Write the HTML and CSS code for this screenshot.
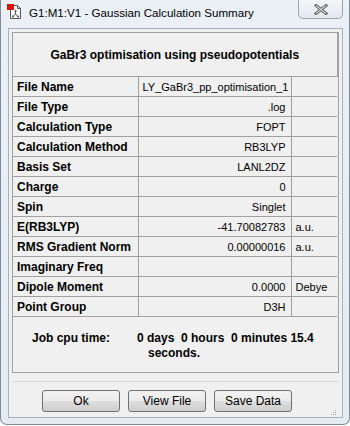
FILE: index.html
```html
<!DOCTYPE html>
<html>
<head>
  <meta name="viewport" content="width=device-width" />
  <link rel="stylesheet" href="styles.css">
  <title>Gaussian Calculation Summary</title>
</head>
<body>
  <div class="window">
    <div class="titlebar">
      <svg class="appicon" width="16" height="16" viewBox="0 0 16 16">
        <path d="M3.5 1.5h7l3 3v10h-10z" fill="#fff" stroke="#555" />
        <path d="M10.5 1.5v3h3" fill="none" stroke="#555" />
        <rect x="0" y="0" width="7" height="6" fill="#e01010" />
        <path d="M8.5 7v3M8.5 10l-2.5 2.5M8.5 10l2.5 2.5" stroke="#555" stroke-width="1" fill="none" />
        <circle cx="8.5" cy="7" r="1.1" fill="#555" />
        <circle cx="6" cy="12.5" r="1.1" fill="#555" />
        <circle cx="11" cy="12.5" r="1.1" fill="#555" />
      </svg>
      <span class="caption">G1:M1:V1 - Gaussian Calculation Summary</span>
      <div class="closebtn">
        <svg width="14" height="11" viewBox="0 0 14 11">
          <path d="M2 1.5l10 8M12 1.5l-10 8" stroke="#6b6b6b" stroke-width="3" stroke-linecap="square" />
          <path d="M2 1.5l10 8M12 1.5l-10 8" stroke="#f4f4f4" stroke-width="1" />
        </svg>
      </div>
    </div>

    <div class="client">
      <div class="group">
        <table class="summary">
          <colgroup>
            <col class="c-label">
            <col class="c-value">
            <col class="c-unit">
          </colgroup>
          <tr><th colspan="3" class="heading">GaBr3 optimisation using pseudopotentials</th></tr>
          <tr><th>File Name</th><td>LY_GaBr3_pp_optimisation_1</td><td class="unit"></td></tr>
          <tr><th>File Type</th><td>.log</td><td class="unit"></td></tr>
          <tr><th>Calculation Type</th><td>FOPT</td><td class="unit"></td></tr>
          <tr><th>Calculation Method</th><td>RB3LYP</td><td class="unit"></td></tr>
          <tr><th>Basis Set</th><td>LANL2DZ</td><td class="unit"></td></tr>
          <tr><th>Charge</th><td>0</td><td class="unit"></td></tr>
          <tr><th>Spin</th><td>Singlet</td><td class="unit"></td></tr>
          <tr><th>E(RB3LYP)</th><td>-41.70082783</td><td class="unit">a.u.</td></tr>
          <tr><th>RMS Gradient Norm</th><td>0.00000016</td><td class="unit">a.u.</td></tr>
          <tr><th>Imaginary Freq</th><td></td><td class="unit"></td></tr>
          <tr><th>Dipole Moment</th><td>0.0000</td><td class="unit">Debye</td></tr>
          <tr><th>Point Group</th><td>D3H</td><td class="unit"></td></tr>
        </table>
        <div class="cputime">
          <span class="cpulabel">Job cpu time:</span>
          <span class="cpuvalue">0 days&nbsp; 0 hours&nbsp; 0 minutes 15.4<br><span class="cpuwrap">seconds.</span></span>
        </div>
      </div>
      <div class="buttons">
        <button class="btn">Ok</button>
        <button class="btn">View File</button>
        <button class="btn">Save Data</button>
        <span class="grip">
          <svg width="6" height="7" viewBox="0 0 6 7">
            <rect x="4" y="1" width="1" height="1" fill="#9aa6b4" />
            <rect x="2" y="3" width="1" height="1" fill="#9aa6b4" />
            <rect x="4" y="3" width="1" height="1" fill="#9aa6b4" />
            <rect x="0" y="5" width="1" height="1" fill="#9aa6b4" />
            <rect x="2" y="5" width="1" height="1" fill="#9aa6b4" />
            <rect x="4" y="5" width="1" height="1" fill="#9aa6b4" />
          </svg>
        </span>
      </div>
    </div>
  </div>
</body>
</html>
```

FILE: styles.css
```css
body {
  margin: 0;
  background-color: #ffffff;
  font-family: "Liberation Sans", Arial, sans-serif;
}
.window {
  width: 348px;
  height: 424px;
  border: 1px solid #7d8a99;
  border-top: none;
  border-radius: 0 0 7px 7px;
  background: linear-gradient(#eaf0f6, #e4ebf3);
  position: relative;
}
.titlebar {
  height: 28px;
  display: flex;
  align-items: center;
  padding-left: 6px;
}
.appicon {
  margin-right: 6px;
  margin-top: -4px;
}
.caption {
  font-family: "Liberation Sans", Arial, sans-serif;
  font-size: 11.6px;
  color: #000;
  margin-top: -4px;
}
.closebtn {
  position: absolute;
  top: 0;
  right: 6px;
  width: 45px;
  height: 19px;
  border: 1px solid #9aa4b2;
  border-top: none;
  border-radius: 0 0 5px 5px;
  background: linear-gradient(#f4f6f9, #e3e8ee);
  display: flex;
  align-items: center;
  justify-content: center;
  box-sizing: border-box;
}
.client {
  margin: 0 6px 0 7px;
  height: 390px;
  border: 1px solid #a6b1be;
  box-sizing: border-box;
  background-color: #f0f0f0;
  padding: 2px 3px 0 3px;
}
.group {
  border: 1px solid #a0a0a0;
  background-color: #f0f0f0;
  margin-top: 1px;
}
.summary {
  width: 324px;
  table-layout: fixed;
  border-collapse: collapse;
  color: #000;
}
.c-label { width: 125px; }
.c-value { width: 153px; }
.c-unit { width: 46px; }
.summary th, .summary td {
  border: 1px solid #a0a0a0;
  height: 19px;
  padding: 0 4px;
  white-space: nowrap;
  overflow: hidden;
}
.summary tr:first-child th { border-top: none; }
.summary th:first-child { border-left: none; }
.summary td.unit { border-right: none; }
.summary th {
  text-align: left;
  font-weight: bold;
  font-size: 12px;
}
.summary td {
  text-align: right;
  font-size: 11px;
  padding-right: 5px;
}
.summary td.unit {
  text-align: left;
  font-size: 11px;
}
.summary th.heading {
  text-align: center;
  font-size: 12px;
  height: 43px;
}
.cputime {
  display: flex;
  font-size: 12px;
  font-weight: bold;
  padding: 14px 0 11px 19px;
  line-height: 15px;
}
.cpulabel {
  width: 105px;
}
.cpuwrap {
  padding-left: 11px;
}
.buttons {
  border-top: 1px solid #d5d5d5;
  margin-top: 8px;
  padding-top: 8px;
  display: flex;
  padding-left: 30px;
  gap: 8px;
  position: relative;
}
.btn {
  width: 78px;
  height: 22px;
  font-family: "Liberation Sans", Arial, sans-serif;
  font-size: 12px;
  color: #000;
  border: 1px solid #707070;
  border-radius: 3px;
  background: linear-gradient(#f2f2f2 0%, #ebebeb 50%, #dddddd 51%, #cfcfcf 100%);
  padding: 0;
}
.grip {
  position: absolute;
  right: 2px;
  bottom: -8px;
}
```
